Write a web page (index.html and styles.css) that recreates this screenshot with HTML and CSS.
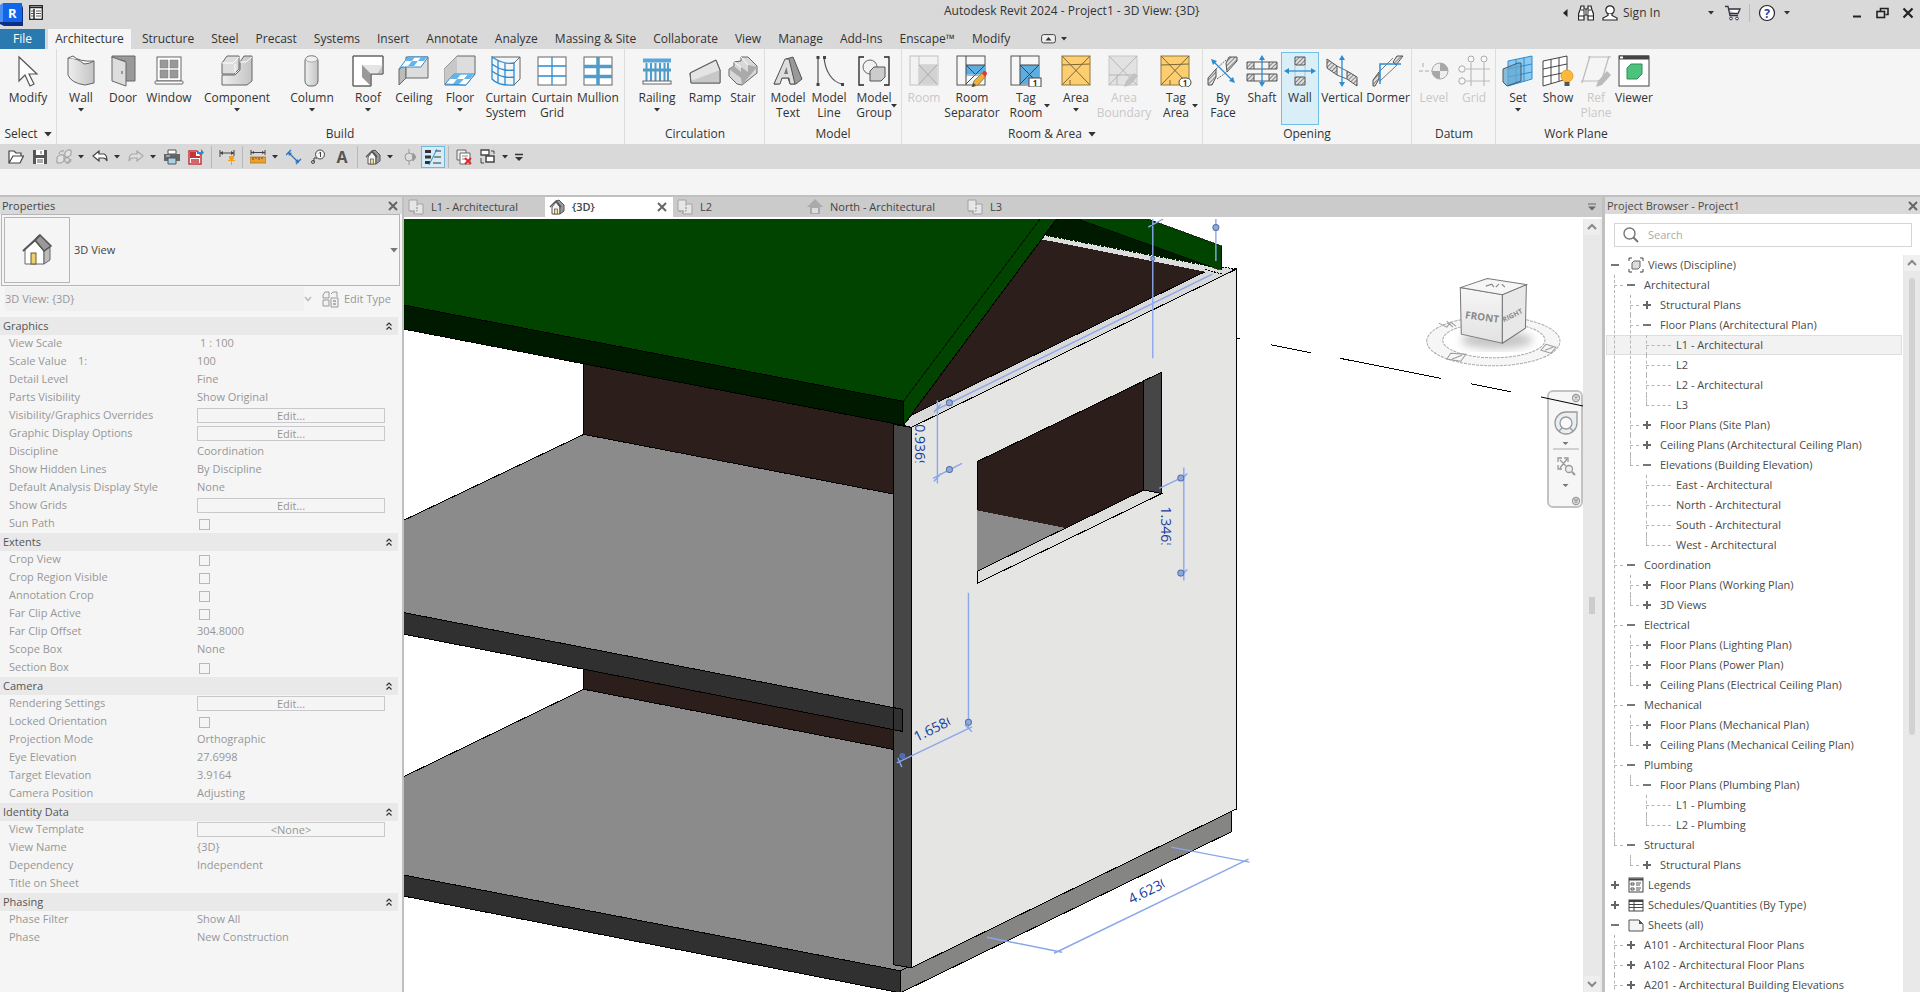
FILE: index.html
```html
<!DOCTYPE html>
<html lang="en">
<head>
<meta charset="utf-8">
<title>Autodesk Revit 2024 - Project1 - 3D View: {3D}</title>
<link rel="stylesheet" href="styles.css">
</head>
<body>
<svg class="defs" aria-hidden="true">
  <defs>
    <pattern id="hatch" width="3" height="3" patternUnits="userSpaceOnUse" patternTransform="rotate(45)"><rect width="3" height="3" fill="#e2e2e2"/><path d="M0 0V3" stroke="#555" stroke-width="1.4"/></pattern>
    <linearGradient id="metal"><stop offset="0" stop-color="#eee"/><stop offset="1" stop-color="#c4c4c4"/></linearGradient>
    <symbol id="caret" viewBox="0 0 6 4"><path d="M0 0H6L3 3.500Z" fill="#333"/></symbol>
    <symbol id="plus" viewBox="0 0 10 10"><path d="M1 5H9M5 1V9" stroke="#666" stroke-width="2"/></symbol>
    <symbol id="minus" viewBox="0 0 10 10"><path d="M1 5H9" stroke="#777" stroke-width="2"/></symbol>
    <symbol id="cross" viewBox="0 0 12 12"><path d="M2 2L10 10M10 2L2 10" stroke="#666" stroke-width="2"/></symbol>
    <symbol id="collapse" viewBox="0 0 8 10"><path d="M1.500 4.500L4 2L6.500 4.500M1.500 8.500L4 6L6.500 8.500" fill="none" stroke="#333" stroke-width="1.200"/></symbol>
    <symbol id="plan" viewBox="0 0 16 16"><path d="M1 1H9V5H15V15H6V12H1Z" fill="#e6e6e6" stroke="#a2a2a2"/><path d="M9 5V12H1M6 12V15M9 8V12" fill="none" stroke="#a2a2a2" stroke-dasharray="2 1"/></symbol>
    <symbol id="house" viewBox="0 0 16 16"><path d="M3 8L7 3L11 8V15H3Z" fill="#f4f4f4" stroke="#555"/><path d="M7 2L10 1L15 6V12L11 15V8Z" fill="#999" stroke="#555"/><path d="M1 8L7 2L12 8" fill="none" stroke="#555" stroke-width="1.400"/><rect x="5.500" y="10" width="3" height="5" fill="#f2e07a" stroke="#555" stroke-width=".7"/></symbol>
  </defs>
</svg>

<header class="titlebar">
  <div class="brand">
    <svg width="23" height="24" viewBox="0 0 23 24"><path d="M0 3L3 1V20L0 22Z" fill="#4b8ff2"/><path d="M22 3L23 6V24H4L0 22V20H22Z" fill="#0b2f86"/><rect x="3" y="1" width="19" height="19" fill="#1265e8"/><text x="8" y="16" class="brand-letter">R</text></svg>
    <svg width="14" height="15" viewBox="0 0 14 15"><rect x=".7" y=".7" width="12.600" height="13.600" fill="#fff" stroke="#222" stroke-width="1.300"/><path d="M1 2.500H13M5 4V14" stroke="#222" stroke-width="1.500"/><path d="M2 6H4M2 8.500H4M2 11H4M7 6H12M7 8.500H12M7 11H12" stroke="#555"/></svg>
  </div>
  <h1 class="title">Autodesk Revit 2024 - Project1 - 3D View: {3D}</h1>
  <div class="account">
    <svg width="5" height="8" viewBox="0 0 5 8"><path d="M4.500 0V8L0 4Z" fill="#222"/></svg>
    <svg class="find" width="16" height="16" viewBox="0 0 16 16"><path d="M2 5L3 1H6V4H10V1H13L14 5L15.500 9V15H10V10H6V15H.5V9Z" fill="#fff" stroke="#222" stroke-width="1.200"/><path d="M3 5H6V9M13 5H10V9M.5 11H6M10 11H15.500M8 4V10" fill="none" stroke="#222"/></svg>
    <button class="signin"><svg width="16" height="16" viewBox="0 0 16 16"><circle cx="8" cy="5" r="4.200" fill="#fff" stroke="#222" stroke-width="1.200"/><path d="M6 9V10.500L1 13V15H15V13L10 10.500V9" fill="#fff" stroke="#222" stroke-width="1.200"/></svg>Sign In</button>
    <svg width="6" height="4"><use href="#caret"/></svg>
    <svg class="cart" width="16" height="16" viewBox="0 0 16 16"><path d="M0 1.500H3L5 10.500H13M3.500 4H15L13 8.500H4.500" fill="#fff" stroke="#334" stroke-width="1.300"/><circle cx="6" cy="13.500" r="1.400" fill="#fff" stroke="#334"/><circle cx="12" cy="13.500" r="1.400" fill="#fff" stroke="#334"/></svg>
    <i></i>
    <svg class="help" width="18" height="18" viewBox="0 0 18 18"><circle cx="9" cy="9" r="7.500" fill="#fff" stroke="#222" stroke-width="1.200"/><text x="9" y="13.500" class="help-mark">?</text></svg>
    <svg width="6" height="4"><use href="#caret"/></svg>
  </div>
  <div class="window-buttons">
    <button aria-label="Minimize"><svg width="12" height="12"><path d="M2 9.500H10" stroke="#222" stroke-width="2"/></svg></button>
    <button aria-label="Restore"><svg width="13" height="12"><path d="M4.500 4V1.500H12V7.500H9.500" fill="none" stroke="#222" stroke-width="1.600"/><rect x="1" y="4.500" width="7.500" height="6" fill="none" stroke="#222" stroke-width="1.600"/></svg></button>
    <button aria-label="Close"><svg width="12" height="12"><path d="M1.500 1.500L10.500 10.500M10.500 1.500L1.500 10.500" stroke="#222" stroke-width="2.200"/></svg></button>
  </div>
</header>

<nav class="tabs">
  <a href="#" class="file">File</a>
  <a href="#" class="active">Architecture</a>
  <a href="#">Structure</a><a href="#">Steel</a><a href="#">Precast</a><a href="#">Systems</a><a href="#">Insert</a><a href="#">Annotate</a><a href="#">Analyze</a><a href="#">Massing &amp; Site</a><a href="#">Collaborate</a><a href="#">View</a><a href="#">Manage</a><a href="#">Add-Ins</a><a href="#">Enscape™</a><a href="#">Modify</a>
  <button class="ribbon-mode" aria-label="Ribbon display"><svg width="15" height="10" viewBox="0 0 15 10"><rect x=".6" y=".6" width="13.800" height="8.300" rx="2" fill="#eee" stroke="#444"/><path d="M4.500 6.500L7.500 3L10.500 6.500Z" fill="#333"/></svg><svg width="6" height="4"><use href="#caret"/></svg></button>
</nav>

<section class="ribbon">
  <div class="panel">
    <div class="tools">
      <button class="w56"><svg viewBox="0 0 32 32"><path d="M7 2V26L13 20L18 31L22 29L17 19H25Z" fill="#fff" stroke="#555" stroke-width="1.200"/></svg><span>Modify</span></button>
    </div>
    <h2>Select <svg width="8" height="5" viewBox="0 0 6 4"><use href="#caret"/></svg></h2>
  </div>
  <div class="panel build">
    <div class="tools">
      <button class="w44"><svg viewBox="0 0 32 32"><path d="M3 3Q13 3 19 9Q24 9 29 6V28L20 30Q6 28 3 20Z" fill="url(#metal)" stroke="#666"/><path d="M3 3L8 1Q14 7 29 6" fill="#f5f5f5" stroke="#666"/></svg><span>Wall</span><svg class="drop"><use href="#caret"/></svg></button>
      <button class="w40"><svg viewBox="0 0 32 32"><path d="M5 1H28V26H18V6L5 3Z" fill="#999" stroke="#666"/><path d="M5 2L19 7V31L5 26Z" fill="#ddd" stroke="#666"/><path d="M15 16V19" stroke="#555"/></svg><span>Door</span></button>
      <button class="w52"><svg viewBox="0 0 32 32"><rect x="4" y="2" width="24" height="24" fill="#fff" stroke="#666"/><path d="M7 5H15V13H7ZM17 5H25V13H17ZM7 15H15V23H7ZM17 15H25V23H17Z" fill="#999" stroke="#777" stroke-width=".5"/><rect x="2" y="26" width="28" height="3" rx="1" fill="#fff" stroke="#666"/></svg><span>Window</span></button>
      <button class="w84"><svg viewBox="0 0 32 32"><path d="M1 8L6 1H18V14L13 19H1Z" fill="#ddd" stroke="#666"/><path d="M19 7L23 1H31V26L26 30H1V20H14L19 15Z" fill="url(#metal)" stroke="#666"/><path d="M1 8H12L18 2M19 7H25L31 2M14 9V18" stroke="#fff" fill="none"/></svg><span>Component</span><svg class="drop"><use href="#caret"/></svg></button>
      <button class="w66"><svg viewBox="0 0 32 32"><rect x="9" y="1" width="13" height="30" rx="5" fill="url(#metal)" stroke="#666"/><ellipse cx="15.500" cy="4" rx="6" ry="3" fill="#f0f0f0" stroke="#888" stroke-width=".6"/></svg><span>Column</span><svg class="drop"><use href="#caret"/></svg></button>
      <button class="w46"><svg viewBox="0 0 32 32"><path d="M1 1H31V19H19V31H1Z" fill="#fff" stroke="#666"/><path d="M1 1L10 10H31V19H19V31L10 22V10Z" fill="#c2c2c2"/><path d="M10 10H31L25 19H19Z" fill="#e5e5e5"/><path d="M19 31L10 22V10L19 19Z" fill="#999"/><path d="M1 1H31V19H19V31H1Z" fill="none" stroke="#666"/></svg><span>Roof</span><svg class="drop"><use href="#caret"/></svg></button>
      <button class="w46"><svg viewBox="0 0 32 32"><path d="M1 14L8 10V23L1 30Z" fill="#bbb" stroke="#666"/><path d="M8 10V23H30V2H8Z" fill="#ddd" stroke="#666"/><path d="M1 14L10 2H30L23 12H4Z" fill="#fff" stroke="#2b8cd2"/><path d="M10 2H17L14 6H7ZM23 2H29L26 6H20ZM14 6H20L16 11H10Z" fill="#64b4e8"/></svg><span>Ceiling</span></button>
      <button class="w46"><svg viewBox="0 0 32 32"><path d="M1 13L13 1H31V19L22 30H1Z" fill="#ddd" stroke="#666"/><path d="M1 13L13 1V19L1 29Z" fill="#c8c8c8"/><path d="M1 29L10 19H31L22 30Z" fill="#fff" stroke="#2b8cd2"/><path d="M10 19H17L13 24H6ZM24 19H30L26 24H20ZM13 24H20L15 29H9Z" fill="#64b4e8"/></svg><span>Floor</span><svg class="drop"><use href="#caret"/></svg></button>
      <button class="w46"><svg viewBox="0 0 32 32"><path d="M2 2L30 2V24L24 30" fill="#f5f5f5" stroke="#666"/><path d="M2 2Q14 10 24 8V30Q8 31 2 24ZM2 9Q12 17 24 15M2 16Q12 24 24 22M8 5V28M15 8V30" fill="none" stroke="#2b8cd2" stroke-width="1.300"/><path d="M24 8L30 2" stroke="#666"/></svg><span>Curtain<br>System</span></button>
      <button class="w46"><svg viewBox="0 0 32 32"><rect x="2" y="2" width="28" height="28" fill="#fff" stroke="#666"/><path d="M16 2V30M2 11H30M2 21H30" stroke="#2b8cd2" stroke-width="1.300"/></svg><span>Curtain<br>Grid</span></button>
      <button class="w46"><svg viewBox="0 0 32 32"><rect x="2" y="2" width="28" height="28" fill="#fff" stroke="#666"/><path d="M16 2V30M2 11.500H30M2 21.500H30" stroke="#4f9bc9" stroke-width="3.500"/></svg><span>Mullion</span></button>
    </div>
    <h2>Build</h2>
  </div>
  <div class="panel pad">
    <div class="tools">
      <button class="w60"><svg viewBox="0 0 32 32"><path d="M2 5.500H30" stroke="#5ba6d8" stroke-width="4"/><path d="M2 15H30" stroke="#4f9bc9" stroke-width="3"/><path d="M5.500 8V26M10 8V26M14.500 8V26M19 8V26M23.500 8V26M27 8V26" stroke="#4f9bc9" stroke-width="2"/><rect x="2" y="26" width="28" height="3" fill="#fff" stroke="#666"/></svg><span>Railing</span><svg class="drop"><use href="#caret"/></svg></button>
      <button class="w36"><svg viewBox="0 0 32 32"><path d="M1 18L27 5L31 15V28H2Z" fill="#e4e4e4" stroke="#666"/><path d="M2 26L31 15V28H2Z" fill="#c8c8c8"/><path d="M1 18L27 5L31 15V28H2Z" fill="none" stroke="#666"/></svg><span>Ramp</span></button>
      <button class="w40"><svg viewBox="0 0 32 32"><path d="M2 14L7 11V7L14 6V2H21L30 11V18L15 30L10 29L2 21Z" fill="#d8d8d8" stroke="#666"/><path d="M2 14L7 11L14 17V12L21 17V10L30 12L15 30L14 23Z" fill="#aaa"/><path d="M7 7L14 12M14 2L21 10" stroke="#fff"/></svg><span>Stair</span></button>
    </div>
    <h2>Circulation</h2>
  </div>
  <div class="panel">
    <div class="tools">
      <button class="w46"><svg viewBox="0 0 32 32"><path d="M2 29L14 4L21 2L30 24L24 29H18L16 23H10L7 29Z" fill="#999" stroke="#555"/><path d="M2 29L13 4H17L23 29H18L17 23H10L8 29Z" fill="#ddd" stroke="#555"/><path d="M12 19L14.500 12L16 19Z" fill="#777"/></svg><span>Model<br>Text</span></button>
      <button class="w36"><svg viewBox="0 0 32 32"><path d="M5 2V30M11 2C12 16 19 27 29 29" fill="none" stroke="#555" stroke-width="1.200"/><path d="M3.500 1H6.500V4H3.500ZM3.500 28H6.500V31H3.500ZM10 1H13V4H10ZM28 28H31V31H28Z" fill="#444"/></svg><span>Model<br>Line</span></button>
      <button class="w54"><svg viewBox="0 0 32 32"><path d="M6 2H1V30H6M26 2H31V30H26" fill="none" stroke="#222" stroke-width="1.300"/><circle cx="12" cy="12" r="7" fill="#f2f2f2" stroke="#666"/><path d="M12 16L16 12H27V22L23 26H12Z" fill="#ccc" stroke="#555"/></svg><span>Model<br>Group</span><svg class="side"><use href="#caret"/></svg></button>
    </div>
    <h2>Model</h2>
  </div>
  <div class="panel">
    <div class="tools">
      <button class="w44 off"><svg viewBox="0 0 32 32"><rect x="2" y="1" width="28" height="29" fill="#f2f2f2" stroke="#c2c2c2"/><path d="M11 1V30M11 10H30" stroke="#c2c2c2"/><path d="M11 10H29V29H11Z" fill="#d2d2d2"/><path d="M11 10L29 29M29 10L11 29" stroke="#aaa"/></svg><span>Room</span></button>
      <button class="w52"><svg viewBox="0 0 32 32"><rect x="1" y="1" width="28" height="29" fill="#f7f7f7" stroke="#555"/><path d="M10 10H29V19H10Z" fill="#5fadde"/><path d="M10 1V30M10 10H29M10 10L19 19M29 10L10 29" stroke="#444" fill="none"/><path d="M10 20H27" stroke="#2b8cd2"/><path d="M16 32L18 26L26 18L30 21L22 30Z" fill="#f5ad35" stroke="#886"/><path d="M26 18L28 16Q31 16 31 19L29 22Z" fill="#e5333c"/><path d="M16 32L17 28L20 30Z" fill="#444"/></svg><span>Room<br>Separator</span></button>
      <button class="w56"><svg viewBox="0 0 32 32"><rect x="1" y="1" width="28" height="29" fill="#f7f7f7" stroke="#555"/><path d="M10 10H29V29H10Z" fill="#5fadde"/><path d="M10 1V30M10 10H29M10 10L29 29M29 10L10 29" stroke="#444"/><rect x="19" y="23" width="12" height="9" fill="#fff" stroke="#444"/><text x="25" y="31" class="tag-no">1</text></svg><span>Tag<br>Room</span><svg class="side"><use href="#caret"/></svg></button>
      <button class="w44"><svg viewBox="0 0 32 32"><rect x="2" y="1" width="28" height="29" fill="#fcce70" stroke="#94793c"/><path d="M2 1L30 30M30 1L2 30M2 10L30 9M10 25V30" stroke="#7d6638"/></svg><span>Area</span><svg class="drop"><use href="#caret"/></svg></button>
      <button class="w52 off"><svg viewBox="0 0 32 32"><rect x="1" y="1" width="28" height="29" fill="#e2e2e2" stroke="#c8c8c8"/><path d="M1 1L29 30M29 1L1 30M1 20H29M9 20V30" stroke="#b5b5b5"/><path d="M16 32L18 26L26 18L30 21L22 30Z" fill="#c2c2c2"/></svg><span>Area<br>Boundary</span></button>
      <button class="w52"><svg viewBox="0 0 32 32"><rect x="1" y="1" width="28" height="29" fill="#fcce70" stroke="#94793c"/><path d="M1 1L29 30M29 1L1 30M1 10L29 9M10 25V30" stroke="#7d6638"/><rect x="19" y="23" width="12" height="9" rx="4.500" fill="#fff" stroke="#444"/><text x="25" y="31" class="tag-no">1</text></svg><span>Tag<br>Area</span><svg class="side"><use href="#caret"/></svg></button>
    </div>
    <h2>Room &amp; Area <svg width="8" height="5" viewBox="0 0 6 4"><use href="#caret"/></svg></h2>
  </div>
  <div class="panel">
    <div class="tools">
      <button class="w40"><svg viewBox="0 0 32 32"><path d="M1 23L9 14V22L5 30H1ZM19 8L22 2H30V6L20 17Z" fill="url(#hatch)" stroke="#555"/><path d="M9 14L19 5M10 24L20 17" stroke="#666" stroke-dasharray="2 1"/><path d="M6 6L26 26" stroke="#2b8cd2" stroke-width="1.300"/><path d="M4 4L10 6L6 10ZM28 28L22 26L26 22Z" fill="#2b8cd2"/></svg><span>By<br>Face</span></button>
      <button class="w38"><svg viewBox="0 0 32 32"><path d="M1 7H8V14H1ZM23 7H31V14H23ZM1 19H8V26H1ZM23 19H31V26H23Z" fill="url(#hatch)" stroke="#555"/><path d="M8 7H23M8 14H23M8 19H23M8 26H23" stroke="#555"/><path d="M16 4V28" stroke="#2b8cd2" stroke-width="1.300"/><path d="M16 0L19 5H13ZM16 32L19 27H13Z" fill="#2b8cd2"/></svg><span>Shaft</span></button>
      <button class="w38 hot"><svg viewBox="0 0 32 32"><path d="M11 2H21V10H11ZM11 22H21V30H11Z" fill="url(#hatch)" stroke="#555"/><path d="M11 10V22M21 10V22" stroke="#b5c4ca"/><path d="M4 16H28" stroke="#2b8cd2" stroke-width="1.300"/><path d="M0 16L5 13V19ZM32 16L27 13V19Z" fill="#2b8cd2"/></svg><span>Wall</span></button>
      <button class="w46"><svg viewBox="0 0 32 32"><path d="M1 4L11 11V20L1 13ZM21 16L31 22V31L21 24Z" fill="url(#hatch)" stroke="#555"/><path d="M11 11L21 16M11 20L21 24" stroke="#666"/><path d="M16 4V28" stroke="#2b8cd2" stroke-width="1.300"/><path d="M16 0L19 5H13ZM16 32L19 27H13Z" fill="#2b8cd2"/></svg><span>Vertical</span></button>
      <button class="w46"><svg viewBox="0 0 32 32"><path d="M1 25L7 17V24L3 31H1ZM21 7L25 1H31L24 10Z" fill="url(#hatch)" stroke="#555"/><path d="M7 17L21 3M8 26L25 10" stroke="#777"/><path d="M8 29V9H29" fill="none" stroke="#2b8cd2" stroke-width="1.500"/></svg><span>Dormer</span></button>
    </div>
    <h2>Opening</h2>
  </div>
  <div class="panel pad">
    <div class="tools">
      <button class="w40 off"><svg viewBox="0 0 32 32"><path d="M1 16H31M5 8V12" stroke="#aaa" stroke-dasharray="4 2"/><circle cx="22" cy="16" r="8" fill="#eee" stroke="#aaa"/><path d="M22 8A8 8 0 0 1 30 16H22V24A8 8 0 0 1 14 16H22Z" fill="#a8a8a8"/></svg><span>Level</span></button>
      <button class="w40 off"><svg viewBox="0 0 32 32"><path d="M13 8V31M26 8V31M8 14H32M8 26H32" stroke="#bbb" stroke-width="1.200"/><circle cx="13" cy="4" r="3" fill="#f8f8f8" stroke="#aaa"/><circle cx="26" cy="4" r="3" fill="#f8f8f8" stroke="#aaa"/><circle cx="4" cy="14" r="3.200" fill="#f8f8f8" stroke="#aaa"/><circle cx="4" cy="26" r="3.200" fill="#f8f8f8" stroke="#aaa"/></svg><span>Grid</span></button>
    </div>
    <h2>Datum</h2>
  </div>
  <div class="panel last">
    <div class="tools">
      <button class="w40"><svg viewBox="0 0 32 32"><path d="M6 6L30 1V24L6 31Z" fill="#8cc9ef" stroke="#2b8cd2"/><path d="M14 4V29M22 3V26M6 14L30 9M6 22L30 17" stroke="#2b8cd2"/><path d="M1 14L16 8H19V26L5 31L1 27Z" fill="#64a8d2" fill-opacity=".75" stroke="#455a68"/></svg><span>Set</span><svg class="drop"><use href="#caret"/></svg></button>
      <button class="w40"><svg viewBox="0 0 32 32"><path d="M1 6L25 1V24L1 31ZM9 4V29M17 3V26M1 14L25 9M1 22L25 17" fill="#fff" stroke="#444"/><circle cx="25" cy="21" r="6" fill="#fdb93c" stroke="#e5a02b"/><path d="M22.500 27H27.500V31H22.500Z" fill="#555"/></svg><span>Show</span></button>
      <button class="w36 off"><svg viewBox="0 0 32 32"><path d="M8 2H31M1 26H24M10 1L2 28M29 1L21 28" stroke="#bbb" stroke-width="1.200"/><path d="M16 32L18 26L27 16L31 20L22 30Z" fill="#bbb"/></svg><span>Ref<br>Plane</span></button>
      <button class="w40"><svg viewBox="0 0 32 32"><rect x="1" y="1" width="30" height="30" fill="#fff" stroke="#444"/><path d="M1 2.500H31" stroke="#444" stroke-width="4"/><path d="M2 1.500H5V3.500H2Z" fill="#fff"/><path d="M9 13L13 9H24V19L19 24H9Z" fill="#4cc27c" stroke="#2e8f56"/></svg><span>Viewer</span></button>
    </div>
    <h2>Work Plane</h2>
  </div>
</section>

<div class="quick">
  <button aria-label="Open"><svg viewBox="0 0 16 16"><path d="M1 14V2H6L8 4H13V7M1 14L5 7H15.500L12 14Z" fill="#fff" stroke="#444" stroke-width="1.200"/></svg></button>
  <button aria-label="Save"><svg viewBox="0 0 16 16"><path d="M1 1H15V15H1Z" fill="#555"/><path d="M4 1H12V6H4ZM4 9H12V15H4Z" fill="#fff"/><path d="M9 2V5M5 11H11M5 13H11" stroke="#555"/></svg></button>
  <button aria-label="Synchronize" class="split"><svg viewBox="0 0 16 16"><path d="M1 8L4 6H8V12L5 14H1ZM9 3L12 1H15V6L12 8H9Z" fill="#e2e2e2" stroke="#999"/><path d="M3 5Q4 1 8 2M10 14Q15 15 15 10" fill="none" stroke="#999"/><circle cx="11" cy="11" r="2.500" fill="none" stroke="#999"/></svg><svg class="c"><use href="#caret"/></svg></button>
  <button aria-label="Undo" class="split"><svg viewBox="0 0 16 16"><path d="M1 7L7 2V5H12Q15 6 15 12Q14 9 11 9H7V12Z" fill="#fff" stroke="#444" stroke-width="1.200"/></svg><svg class="c"><use href="#caret"/></svg></button>
  <button aria-label="Redo" class="split"><svg viewBox="0 0 16 16"><path d="M15 7L9 2V5H4Q1 6 1 12Q2 9 5 9H9V12Z" fill="#ddd" stroke="#aaa" stroke-width="1.200"/></svg><svg class="c"><use href="#caret"/></svg></button>
  <button aria-label="Print"><svg viewBox="0 0 16 16"><path d="M4 1H12V5H4Z" fill="#fff" stroke="#555"/><path d="M0 5H16V12H0Z" fill="#666"/><path d="M4 9H12V15H4Z" fill="#a9cfe9" stroke="#555"/><path d="M2 7H6" stroke="#ddd"/></svg></button>
  <button aria-label="Export PDF"><svg viewBox="0 0 16 16"><path d="M1 2H9L13 6V15H1Z" fill="#fff" stroke="#c5343a" stroke-width="1.500"/><path d="M2 3H8V7H12V9H2Z" fill="#c5343a"/><path d="M3 11H11M3 13H11" stroke="#c5343a" stroke-width="1.400"/><path d="M9 3H13V0L16 3.500L13 7V5H9Z" fill="#2b8cd2"/></svg></button>
  <i></i>
  <button aria-label="Aligned dimension"><svg viewBox="0 0 16 16"><path d="M1 1V8M15 1V7M1 4H15" stroke="#444"/><path d="M1 4L4 2V6ZM15 4L12 2V6Z" fill="#444"/><path d="M10 7H15V9L14 11H16V12H13V16H12V12H9V11H11L10 9Z" fill="#f0a020"/></svg></button>
  <i></i>
  <button aria-label="Measure" class="split"><svg viewBox="0 0 16 16"><path d="M1 1V6M15 1V6M1 3.500H15" stroke="#444"/><path d="M1 3.500L4 2V5ZM15 3.500L12 2V5Z" fill="#444"/><path d="M0 8H16V14H0Z" fill="#eda12c" stroke="#a46e18" stroke-width=".7"/><path d="M3 8V11M6 8V10M9 8V11M12 8V10" stroke="#744"/></svg><svg class="c"><use href="#caret"/></svg></button>
  <button aria-label="Dimension"><svg viewBox="0 0 16 16"><path d="M3 4L12 13M0 6L5 1M10 15L15 10" stroke="#2b73c2" stroke-width="1.300"/><path d="M2 3L6 4L3 7ZM13 14L9 13L12 10Z" fill="#2b73c2"/></svg></button>
  <button aria-label="Tag"><svg viewBox="0 0 16 16"><circle cx="10" cy="5.500" r="4.500" fill="#f4f4f4" stroke="#444"/><path d="M9 4.500L10.500 3V8M7 9H4V13" fill="none" stroke="#444"/><circle cx="3" cy="13" r="1.500" fill="none" stroke="#444"/></svg></button>
  <button aria-label="Text" class="big-a">A</button>
  <i></i>
  <button aria-label="Default 3D view" class="split"><svg viewBox="0 0 16 16"><use href="#house"/></svg><svg class="c"><use href="#caret"/></svg></button>
  <button aria-label="Section"><svg viewBox="0 0 16 16"><circle cx="8" cy="8" r="4" fill="#ddd" stroke="#999"/><path d="M8 0V4M8 12V16M12 4L15 8L12 12Z" stroke="#999" fill="#999"/></svg></button>
  <button aria-label="Thin lines" class="on"><svg viewBox="0 0 16 16"><path d="M0 2.500H6M0 8H6M0 13.500H5" stroke="#333" stroke-width="3"/><path d="M10 2H16M9 8H16M8 14H16" stroke="#333"/><path d="M12 0L4 16" stroke="#2b8cd2"/></svg></button>
  <i></i>
  <button aria-label="Close inactive"><svg viewBox="0 0 16 16"><path d="M1 1H10V11H1Z" fill="#eee" stroke="#666"/><path d="M4 4H14V15H4Z" fill="#fff" stroke="#666"/><path d="M6 7H12M6 10H10" stroke="#888"/><path d="M9 9L15 15M15 9L9 15" stroke="#e02a33" stroke-width="2"/></svg></button>
  <button aria-label="Switch windows" class="split"><svg viewBox="0 0 16 16"><path d="M1 1H9V6H1Z" fill="#fff" stroke="#444" stroke-width="1.300"/><path d="M6 7H14V13H6Z" fill="#fff" stroke="#444" stroke-width="1.500"/><path d="M11 2H14V5M4 14H1V9" fill="none" stroke="#444"/></svg><svg class="c"><use href="#caret"/></svg></button>
  <button aria-label="Customize" class="custom"><svg viewBox="0 0 16 16"><path d="M4 5.500H12" stroke="#333" stroke-width="1.500"/><path d="M4 8H12L8 12Z" fill="#333"/></svg></button>
</div>
<div class="options"></div>

<main class="dock">
  <aside class="properties">
    <header class="dock-title"><h2>Properties</h2><button aria-label="Close properties"><svg width="12" height="12"><use href="#cross"/></svg></button></header>
    <button class="type">
      <span class="thumb"><svg width="32" height="32" viewBox="0 0 32 32"><path d="M4 15L14 7L23 17V30H4Z" fill="#fff" stroke="#666"/><path d="M23 17L29 13V26L23 30Z" fill="#bbb" stroke="#666"/><path d="M14 6L19 1L30 12L23 17Z" fill="#999" stroke="#555" stroke-width="1.500"/><path d="M2 17L14 6L19 1" fill="none" stroke="#555" stroke-width="2"/><rect x="10" y="19" width="5" height="11" fill="#efcf70" stroke="#6a5a2a"/></svg></span>
      <span class="type-name">3D View</span>
      <svg width="8" height="5" viewBox="0 0 6 4"><path d="M0 0H6L3 3.500Z" fill="#777"/></svg>
    </button>
    <div class="instance">
      <select aria-label="Instance"><option>3D View: {3D}</option></select>
      <svg class="chev" width="8" height="6"><path d="M1 1L4 4.500L7 1" fill="none" stroke="#bbb" stroke-width="1.500"/></svg>
      <button><svg width="17" height="17" viewBox="0 0 17 17"><path d="M1 4L3 1H7V7H1ZM9 3L11 1H15V6M1 9H7V15H1ZM9 7H16V16H9Z" fill="#f2f2f2" stroke="#999"/><path d="M11 10H14M11 13H14" stroke="#999" stroke-width="1.500"/></svg>Edit Type</button>
    </div>
    <table class="props">
      <colgroup><col class="name"><col></colgroup>
      <tbody>
        <tr class="group"><th colspan="2">Graphics <svg><use href="#collapse"/></svg></th></tr>
        <tr><td>View Scale</td><td class="in">1 : 100</td></tr>
        <tr><td>Scale Value &nbsp;&nbsp; 1:</td><td>100</td></tr>
        <tr><td>Detail Level</td><td>Fine</td></tr>
        <tr><td>Parts Visibility</td><td>Show Original</td></tr>
        <tr><td>Visibility/Graphics Overrides</td><td><button>Edit...</button></td></tr>
        <tr><td>Graphic Display Options</td><td><button>Edit...</button></td></tr>
        <tr><td>Discipline</td><td>Coordination</td></tr>
        <tr><td>Show Hidden Lines</td><td>By Discipline</td></tr>
        <tr><td>Default Analysis Display Style</td><td>None</td></tr>
        <tr><td>Show Grids</td><td><button>Edit...</button></td></tr>
        <tr><td><label for="sun">Sun Path</label></td><td><input type="checkbox" id="sun"></td></tr>
      </tbody>
      <tbody>
        <tr class="group"><th colspan="2">Extents <svg><use href="#collapse"/></svg></th></tr>
        <tr><td><label for="crop">Crop View</label></td><td><input type="checkbox" id="crop"></td></tr>
        <tr><td><label for="region">Crop Region Visible</label></td><td><input type="checkbox" id="region"></td></tr>
        <tr><td><label for="anno">Annotation Crop</label></td><td><input type="checkbox" id="anno"></td></tr>
        <tr><td><label for="far">Far Clip Active</label></td><td><input type="checkbox" id="far"></td></tr>
        <tr><td>Far Clip Offset</td><td>304.8000</td></tr>
        <tr><td>Scope Box</td><td>None</td></tr>
        <tr><td><label for="section">Section Box</label></td><td><input type="checkbox" id="section"></td></tr>
      </tbody>
      <tbody>
        <tr class="group"><th colspan="2">Camera <svg><use href="#collapse"/></svg></th></tr>
        <tr><td>Rendering Settings</td><td><button>Edit...</button></td></tr>
        <tr><td><label for="locked">Locked Orientation</label></td><td><input type="checkbox" id="locked"></td></tr>
        <tr><td>Projection Mode</td><td>Orthographic</td></tr>
        <tr><td>Eye Elevation</td><td>27.6998</td></tr>
        <tr><td>Target Elevation</td><td>3.9164</td></tr>
        <tr><td>Camera Position</td><td>Adjusting</td></tr>
      </tbody>
      <tbody>
        <tr class="group"><th colspan="2">Identity Data <svg><use href="#collapse"/></svg></th></tr>
        <tr><td>View Template</td><td><button>&lt;None&gt;</button></td></tr>
        <tr><td>View Name</td><td>{3D}</td></tr>
        <tr><td>Dependency</td><td>Independent</td></tr>
        <tr><td>Title on Sheet</td><td></td></tr>
      </tbody>
      <tbody>
        <tr class="group"><th colspan="2">Phasing <svg><use href="#collapse"/></svg></th></tr>
        <tr><td>Phase Filter</td><td>Show All</td></tr>
        <tr><td>Phase</td><td>New Construction</td></tr>
      </tbody>
    </table>
  </aside>

  <section class="workspace">
    <div class="view-tabs">
      <button><svg><use href="#plan"/></svg>L1 - Architectural</button>
      <button class="active"><svg><use href="#house"/></svg>{3D}<svg class="x"><use href="#cross"/></svg></button>
      <button><svg><use href="#plan"/></svg>L2</button>
      <button class="wide"><svg viewBox="0 0 16 16"><path d="M8 0L16 8H13V15H3V8H0Z" fill="#aaa"/><path d="M5 9H11V14H5Z" fill="#ddd"/></svg>North - Architectural</button>
      <button><svg><use href="#plan"/></svg>L3</button>
      <svg class="list" viewBox="0 0 10 8"><path d="M1 1H9" stroke="#666"/><path d="M1 3.500H9L5 7.500Z" fill="#666"/></svg>
    </div>
    <div class="view">
      <svg class="scene" viewBox="405 219 1177 773" preserveAspectRatio="xMinYMin slice" role="img" aria-label="3D model of a two-storey house">
        <defs>
          <clipPath id="c1"><rect x="0" y="-14" width="38" height="18"/></clipPath>
          <linearGradient id="face" x2="0" y2="1"><stop offset="0" stop-color="#f6f6f6"/><stop offset="1" stop-color="#e2e2e2"/></linearGradient>
          <filter id="soft"><feGaussianBlur stdDeviation="4"/></filter>
        </defs>
        <g stroke="#000" shape-rendering="crispEdges">
          <path d="M1236 338.500H1240M1270 344.500L1310 352.500M1339 358L1440 378M1470 383.500L1510 391.500" fill="none"/>
          <path d="M584.500 360V434L893.500 493.500V420Z" fill="#2c1e1b"/>
          <path d="M400 522L584.500 434L893.500 493.500V708L400 612Z" fill="#8b8b8b"/>
          <path d="M584.500 664V688.500L893.500 748.500V724Z" fill="#2c1e1b"/>
          <path d="M400 778L584.500 688.500L893.500 748.500V965L900.500 969.500L400 873Z" fill="#8b8b8b"/>
          <path d="M893 962L912 966L900.500 970L893 969Z" fill="#8b8b8b" stroke="none"/>
          <path d="M400 873L900.500 969.500V991.500L400 894Z" fill="#303030"/>
          <path d="M900.500 969.500L1231.500 808V830.500L900.500 991.500Z" fill="#858584"/>
          <path d="M893.500 424L911.500 427V966.500L893.500 963.500Z" fill="#464646"/>
          <path d="M400 611L902.500 708.500V730.500L400 632.500Z" fill="#303030"/>
          <path d="M893.500 706V730" fill="none"/>
          <path d="M911.500 427L1236 269V808L911.500 966.500Z" fill="#e5e5e3"/>
          <path d="M1030 236L1045 237L1207 271L912 417H895Z" fill="#2c1e1b" stroke="none"/>
          <path d="M903 425L912 414.500L1207 270.500L1236 269L911.500 427Z" fill="#d9d9d9"/>
          <path d="M1040 235L1222 267L1236 269L1207 272L1040 239Z" fill="#ddd" stroke="none"/>
          <path d="M1040 218H1077L1219 268.500L1040 235Z" fill="#001a00" stroke="none"/>
          <path d="M1045 235.500L1219 268" fill="none" stroke="#fff" stroke-dasharray="1 3"/>
          <path d="M1222 267L1236 269M1205 269.500L1222 274" fill="none" stroke-dasharray="2 1"/>
          <path d="M1075 218H1145L1221.500 246V269.500L1217 269Z" fill="#004400" stroke-width=".7"/>
          <path d="M400 215H1059.500L903.500 425V401L400 304Z" fill="#004400"/>
          <path d="M1040 219L903.500 401" fill="none" stroke="#001800"/>
          <path d="M400 304L903.500 401V425L400 328Z" fill="#001a00"/>
          <path d="M977.500 461L1161.500 372V493L977.500 582.500Z" fill="#2c1e1b"/>
          <path d="M977.500 510L1065.500 527.500L977.500 570.500Z" fill="#8b8b8b" stroke="none"/>
          <path d="M1143.500 380.500L1161.500 372V493L1143.500 489.500Z" fill="#464646"/>
          <path d="M977.500 570.500L1143.500 489.500L1161.500 493L977.500 582.500Z" fill="#dededc"/>
        </g>
        <g fill="none" stroke="#8aa6ec" stroke-width="1.400">
          <path d="M1152.500 219V358M1148 227L1163 219M1215.500 219V261M935 410L1212 274M937.500 400V483M933 478L962 463M1159 488L1184 476M1183.500 467V580M968.500 592V728M897 762L972 726M1054 952L1248 858M987 936L1062 951M1171 846L1249 861M934 412L941 404M934 481L941 473M1180 480L1187 473M1180 576L1187 569M898 757L902 766M965 724L972 731"/>
        </g>
        <g fill="#8fa9dd" stroke="#5570a5">
          <circle cx="949.500" cy="402.500" r="3"/><circle cx="949.500" cy="469" r="3"/><circle cx="1180.500" cy="477.500" r="3"/><circle cx="1180.500" cy="572.500" r="3"/><circle cx="968.500" cy="721.500" r="3"/><circle cx="902.500" cy="755" r="2.500" fill="#456fc4"/><circle cx="1215.500" cy="227.500" r="3"/><circle cx="1152.500" cy="258.500" r="2"/>
        </g>
        <g class="dims">
          <g transform="translate(915 424) rotate(90)"><text clip-path="url(#c1)">0.9369</text></g>
          <g transform="translate(1161 506) rotate(90)"><text clip-path="url(#c1)">1.3465</text></g>
          <g transform="translate(917 741) rotate(-26)"><text clip-path="url(#c1)">1.6586</text></g>
          <g transform="translate(1131 903) rotate(-26)"><text clip-path="url(#c1)">4.6230</text></g>
        </g>
        <g class="cube">
          <path fill-rule="evenodd" d="M1426 341A66.500 24.500 0 0 1 1559 341A66.500 24.500 0 0 1 1426 341ZM1442 340A51 17.500 0 0 0 1544 340A51 17.500 0 0 0 1442 340Z" fill="#f6f6f6" stroke="#aaa" stroke-dasharray="3 1"/>
          <ellipse cx="1496" cy="340" rx="36" ry="9" fill="#999" opacity=".55" filter="url(#soft)"/>
          <path d="M1459.500 287.500L1501.500 294.500V343L1460.500 334Z" fill="url(#face)" stroke="#777"/>
          <path d="M1501.500 294.500L1525.500 284.500L1524.500 328L1501.500 343Z" fill="#e8e8e8" stroke="#777"/>
          <path d="M1459.500 287.500L1486.500 278.500L1525.500 284.500L1501.500 294.500Z" fill="#f6f6f6" stroke="#777"/>
          <path d="M1485 286L1491 284L1493 287M1495 287L1498 284M1501 284L1504 287" fill="none" stroke="#888" stroke-width="1.200"/>
          <text x="0" y="0" transform="translate(1464 318) rotate(8)" font-size="10">FRONT</text>
          <text x="0" y="0" transform="translate(1503 322) rotate(-26)" font-size="7">RIGHT</text>
          <g fill="none" stroke="#999"><path d="M1438 323L1446 327L1450 322L1455 326M1446 321L1452 327"/><path d="M1446 359L1450 353L1465 354L1460 361ZM1451 359L1461 355"/><path d="M1540 350L1545 344L1555 347L1550 353ZM1544 350L1552 347"/></g>
        </g>
      </svg>
      <div class="nav">
        <svg viewBox="0 0 34 116"><path d="M-8 5L34 14" stroke="#000"/>
          <g fill="#eee" stroke="#999" stroke-width="1.300"><circle cx="27" cy="6" r="3.500"/><path d="M25.500 4.500L28.500 7.500M28.500 4.500L25.500 7.500"/><circle cx="27" cy="109" r="3.500"/><path d="M25 108H29M25.500 110H28.500"/>
          <path d="M17 20H28V31A11 11 0 1 1 17 20Z" fill="#e8eff2"/><circle cx="17" cy="31" r="6" fill="#fafafa"/><path d="M13 36L10 39M21 36L24 39"/>
          <path d="M4 57H30" stroke="#bbb"/><path d="M9 70V66H13M15 66H19V70M9 73V77H13M11 68L17 74M18 67L11 76" fill="none"/><circle cx="20" cy="77" r="3.500"/><path d="M23 80L26 83" stroke-width="2"/></g>
          <path d="M13.500 50H19.500L16.500 53ZM13.500 92H19.500L16.500 95Z" fill="#777"/></svg>
      </div>
      <div class="vscroll"><svg viewBox="0 0 16 16"><path d="M4 10L8 6L12 10" fill="none" stroke="#888" stroke-width="2"/></svg><span></span><svg viewBox="0 0 16 16"><path d="M4 6L8 10L12 6" fill="none" stroke="#888" stroke-width="2"/></svg></div>
    </div>
  </section>

  <aside class="browser">
    <header class="dock-title"><h2>Project Browser - Project1</h2><button aria-label="Close browser"><svg width="12" height="12"><use href="#cross"/></svg></button></header>
    <label class="search"><svg width="16" height="16" viewBox="0 0 16 16"><circle cx="6.500" cy="6.500" r="5.500" fill="none" stroke="#777" stroke-width="1.400"/><path d="M10.500 10.500L15 15" stroke="#777" stroke-width="2"/></svg><input type="text" placeholder="Search"></label>
    <div class="tree-area">
      <ul class="tree">
        <li><div><button><svg><use href="#minus"/></svg></button><svg class="icon" viewBox="0 0 16 16"><path d="M4 1H1V4M12 1H15V4M1 12V15H4M15 12V15H12" fill="none" stroke="#444"/><path d="M4 6L6 4H12V10L10 12H4Z" fill="#ddd" stroke="#666"/></svg>Views (Discipline)</div>
          <ul>
            <li><div><button><svg><use href="#minus"/></svg></button>Architectural</div>
              <ul>
                <li><div><button><svg><use href="#plus"/></svg></button>Structural Plans</div></li>
                <li><div><button><svg><use href="#minus"/></svg></button>Floor Plans (Architectural Plan)</div>
                  <ul>
                    <li class="leaf"><div class="selected">L1 - Architectural</div></li>
                    <li class="leaf"><div>L2</div></li>
                    <li class="leaf"><div>L2 - Architectural</div></li>
                    <li class="leaf"><div>L3</div></li>
                  </ul></li>
                <li><div><button><svg><use href="#plus"/></svg></button>Floor Plans (Site Plan)</div></li>
                <li><div><button><svg><use href="#plus"/></svg></button>Ceiling Plans (Architectural Ceiling Plan)</div></li>
                <li><div><button><svg><use href="#minus"/></svg></button>Elevations (Building Elevation)</div>
                  <ul>
                    <li class="leaf"><div>East - Architectural</div></li>
                    <li class="leaf"><div>North - Architectural</div></li>
                    <li class="leaf"><div>South - Architectural</div></li>
                    <li class="leaf"><div>West - Architectural</div></li>
                  </ul></li>
              </ul></li>
            <li><div><button><svg><use href="#minus"/></svg></button>Coordination</div>
              <ul>
                <li><div><button><svg><use href="#plus"/></svg></button>Floor Plans (Working Plan)</div></li>
                <li><div><button><svg><use href="#plus"/></svg></button>3D Views</div></li>
              </ul></li>
            <li><div><button><svg><use href="#minus"/></svg></button>Electrical</div>
              <ul>
                <li><div><button><svg><use href="#plus"/></svg></button>Floor Plans (Lighting Plan)</div></li>
                <li><div><button><svg><use href="#plus"/></svg></button>Floor Plans (Power Plan)</div></li>
                <li><div><button><svg><use href="#plus"/></svg></button>Ceiling Plans (Electrical Ceiling Plan)</div></li>
              </ul></li>
            <li><div><button><svg><use href="#minus"/></svg></button>Mechanical</div>
              <ul>
                <li><div><button><svg><use href="#plus"/></svg></button>Floor Plans (Mechanical Plan)</div></li>
                <li><div><button><svg><use href="#plus"/></svg></button>Ceiling Plans (Mechanical Ceiling Plan)</div></li>
              </ul></li>
            <li><div><button><svg><use href="#minus"/></svg></button>Plumbing</div>
              <ul>
                <li><div><button><svg><use href="#minus"/></svg></button>Floor Plans (Plumbing Plan)</div>
                  <ul>
                    <li class="leaf"><div>L1 - Plumbing</div></li>
                    <li class="leaf"><div>L2 - Plumbing</div></li>
                  </ul></li>
              </ul></li>
            <li><div><button><svg><use href="#minus"/></svg></button>Structural</div>
              <ul>
                <li><div><button><svg><use href="#plus"/></svg></button>Structural Plans</div></li>
              </ul></li>
          </ul></li>
        <li><div><button><svg><use href="#plus"/></svg></button><svg class="icon" viewBox="0 0 16 16"><rect x="1" y="1" width="14" height="14" fill="#fff" stroke="#444"/><path d="M1 2.500H15" stroke="#444" stroke-width="2"/><path d="M3 6H6V8H3ZM3 11H6V13H3ZM8 6H13M8 8H12M8 11H13M8 13H12" fill="none" stroke="#555"/></svg>Legends</div></li>
        <li><div><button><svg><use href="#plus"/></svg></button><svg class="icon" viewBox="0 0 16 16"><rect x="1" y="3" width="14" height="11" fill="#fff" stroke="#444"/><path d="M1 4H15" stroke="#444" stroke-width="2"/><path d="M1 7.500H15M1 10.500H15M6 3V14" stroke="#444"/></svg>Schedules/Quantities (By Type)</div></li>
        <li><div><button><svg><use href="#minus"/></svg></button><svg class="icon" viewBox="0 0 16 16"><path d="M1 3H11L15 7V14H1Z" fill="#f4f4f4" stroke="#555"/><path d="M11 3L15 7H11Z" fill="#555"/></svg>Sheets (all)</div>
          <ul>
            <li><div><button><svg><use href="#plus"/></svg></button>A101 - Architectural Floor Plans</div></li>
            <li><div><button><svg><use href="#plus"/></svg></button>A102 - Architectural Floor Plans</div></li>
            <li><div><button><svg><use href="#plus"/></svg></button>A201 - Architectural Building Elevations</div></li>
            <li></li>
          </ul></li>
      </ul>
      <div class="tscroll"><svg viewBox="0 0 16 16"><path d="M4 10L8 6L12 10" fill="none" stroke="#888" stroke-width="2"/></svg><span></span></div>
    </div>
  </aside>
</main>
</body>
</html>
```
FILE: styles.css
```css
* { box-sizing: border-box; }
html, body { height: 100%; }
body {
  margin: 0;
  display: flex;
  flex-direction: column;
  overflow: hidden;
  background: #f5f5f5;
  color: #333;
  font: 12px/16px "Open Sans", "Noto Sans", sans-serif;
}
button, input, select { font: inherit; color: inherit; background: none; border: 0; padding: 0; margin: 0; }
h1, h2 { margin: 0; font: inherit; }
a { color: inherit; text-decoration: none; }
ul { list-style: none; margin: 0; padding: 0; }
svg { display: block; flex: none; }
.defs { position: absolute; width: 0; height: 0; }

/* Title bar */
.titlebar { flex: none; display: flex; height: 29px; background: #d9d9d9; }
.brand { display: flex; gap: 6px; padding: 2px 0 0 0; }
.brand svg + svg { margin-top: 3px; }
.brand-letter { font: bold 13px "Open Sans", sans-serif; fill: #fff; }
.title { flex: 1; padding: 3px 0 0 28%; text-align: center; white-space: nowrap; }
.account { display: flex; align-items: center; padding-bottom: 4px; }
.account i { width: 1px; height: 18px; background: #bbb; }
.find { margin: 0 8px 0 10px; }
.signin { display: flex; align-items: center; gap: 5px; width: 106px; }
.cart { margin: 0 8px 0 11px; }
.help { margin: 0 8px; }
.help-mark { font: bold 12px "Open Sans", sans-serif; fill: #2440b0; text-anchor: middle; }
.window-buttons { display: flex; align-items: center; gap: 13px; padding: 0 6px 4px 61px; }

/* Ribbon tabs */
.tabs { flex: none; display: flex; height: 20px; background: #d9d9d9; }
.tabs a { padding: 2px 9px 0 8px; white-space: nowrap; }
.tabs .file { width: 45px; padding: 2px 0 0; margin-right: 3px; text-align: center; background: #2a7ab0; color: #fff; }
.tabs .active { width: 83px; padding: 2px 0 0; text-align: center; background: #f5f5f5; margin-right: 3px; }
.ribbon-mode { display: flex; align-items: center; gap: 5px; margin-left: 22px; }

/* Ribbon */
.ribbon { flex: none; display: flex; height: 95px; background: #f5f5f5; }
.panel { display: flex; flex-direction: column; justify-content: space-between; border-right: 1px solid #dcdcdc; padding-top: 3px; }
.panel.build { padding: 3px 3px 0 2px; }
.panel.pad { padding-left: 2px; padding-right: 1px; }
.panel.last { border: 0; padding-left: 2px; }
.panel h2 { display: flex; justify-content: center; align-items: center; gap: 6px; padding-bottom: 2px; white-space: nowrap; }
.tools { display: flex; }
.tools button { position: relative; display: flex; flex-direction: column; align-items: center; height: 73px; padding-top: 2px; line-height: 15px; white-space: nowrap; border: 1px solid transparent; }
.tools button > svg:first-child { width: 32px; height: 32px; margin-bottom: 3px; }
.tools .drop { width: 6px; height: 4px; margin-top: 3px; }
.tools .side { position: absolute; right: 3px; bottom: 16px; width: 6px; height: 4px; }
.tools .off { color: #c8c8c8; }
.tools .hot { background: #d9eef6; border-color: #6fc0e4; }
.tag-no { font: bold 8px "Open Sans", sans-serif; text-anchor: middle; fill: #333; }
.w36 { width: 36px; } .w38 { width: 38px; } .w40 { width: 40px; } .w44 { width: 44px; }
.w46 { width: 46px; } .w52 { width: 52px; } .w54 { width: 54px; } .w56 { width: 56px; }
.w60 { width: 60px; } .w66 { width: 66px; } .w84 { width: 84px; }

/* Quick access toolbar */
.quick { flex: none; display: flex; align-items: center; height: 25px; padding-left: 4px; background: #d9d9d9; }
.quick button { display: flex; align-items: center; justify-content: center; gap: 6px; width: 24px; height: 22px; }
.quick button svg { width: 16px; height: 16px; }
.quick .split { width: 36px; }
.quick .split .c { width: 6px; height: 4px; }
.quick .on { background: #d6ebf5; border: 1px solid #6fb9dc; }
.quick .big-a { font-size: 16px; font-weight: bold; line-height: 22px; color: #555; }
.quick .custom { width: 20px; }
.quick .custom svg { margin-right: 6px; }
.quick i { width: 1px; height: 22px; margin: 0 3px; background: #b8b8b8; }
.options { flex: none; height: 26px; background: #f5f5f5; }

/* Docked area */
.dock { flex: 1; min-height: 0; display: flex; border-top: 2px solid #c0c0c0; font-size: 11px; }
.dock-title { flex: none; display: flex; justify-content: space-between; align-items: center; height: 17px; background: #d9d9d9; padding: 0 3px 0 2px; }

/* Properties palette */
.properties { flex: none; width: 404px; border-right: 2px solid #c0c0c0; background: #f5f5f5; color: #979797; }
.properties .dock-title { color: #444; }
.type { display: flex; align-items: center; width: 399px; height: 72px; margin-left: 1px; padding: 2px 1px 2px 2px; border: 1px solid #b5b5b5; color: #444; }
.thumb { display: grid; place-items: center; width: 66px; height: 66px; border: 1px solid #b5b5b5; }
.type-name { flex: 1; padding-left: 4px; text-align: left; }
.instance { display: flex; align-items: center; height: 31px; padding: 0 2px 5px 5px; }
.instance select { flex: 1; appearance: none; height: 24px; background: #f0f0f0; }
.instance .chev { margin-right: 10px; }
.instance button { display: flex; align-items: center; gap: 5px; width: 78px; white-space: nowrap; }
.props { table-layout: fixed; width: 398px; border-collapse: collapse; line-height: 16px; }
.props .name { width: 196px; }
.props tr { height: 18px; }
.props td, .props th { padding: 0; font-weight: normal; text-align: left; vertical-align: top; white-space: nowrap; }
.props td:first-child { padding-left: 9px; }
.props td:last-child { padding-left: 1px; padding-right: 13px; }
.props td.in { padding-left: 4px; }
.props th { background: #e9e9e9; color: #555; padding: 1px 0 0 3px; }
.props th svg { float: right; width: 8px; height: 10px; margin: 3px 5px 0 0; }
.props button { display: block; width: 100%; height: 15px; line-height: 12px; margin-top: 1px; border: 1px solid #c9c9c9; }
.props input { display: block; appearance: none; width: 11px; height: 11px; margin: 4px 0 0 2px; border: 1px solid #b8b8b8; }

/* View tabs and drawing area */
.workspace { flex: 1; min-width: 0; display: flex; flex-direction: column; background: #fff; }
.view-tabs { flex: none; display: flex; align-items: center; height: 20px; background: #cbcbcb; color: #444; }
.view-tabs button { display: flex; align-items: center; gap: 7px; width: 130px; height: 20px; padding-left: 4px; white-space: nowrap; }
.view-tabs button:first-child { width: 141px; }
.view-tabs .wide { width: 160px; }
.view-tabs button svg { width: 16px; height: 16px; }
.view-tabs .active { width: 128px; background: #fff; font-weight: 600; }
.view-tabs .active .x { width: 12px; height: 12px; margin: 0 5px 0 auto; }
.view-tabs .list { width: 10px; height: 8px; margin: 0 5px 0 auto; }
.view { flex: 1; min-height: 0; position: relative; display: flex; margin-top: 2px; }
.scene { flex: 1; min-width: 0; height: 100%; }
.dims text { font: 14px "Open Sans", sans-serif; fill: #1340a0; }
.cube text { font-family: "Open Sans", sans-serif; font-weight: bold; fill: #8a8a8a; }
.nav { position: absolute; top: 171px; right: 19px; width: 36px; height: 118px; border: 2px solid #c2c2c2; border-radius: 6px; background: rgba(245, 245, 245, .9); }
.nav svg { width: 34px; height: 116px; overflow: visible; }
.vscroll { flex: none; display: flex; flex-direction: column; justify-content: space-between; align-items: center; width: 19px; padding-right: 1px; background: #e8e8e8; }
.vscroll svg { width: 16px; height: 16px; background: #eee; }
.vscroll span { width: 6px; height: 17px; background: #ccc; }

/* Project browser */
.browser { flex: none; display: flex; flex-direction: column; width: 318px; border-left: 3px solid #c0c0c0; background: #fff; color: #4a4a4a; }
.browser .dock-title { padding-right: 1px; }
.search { display: flex; align-items: center; flex: none; gap: 9px; height: 24px; margin: 9px 8px 8px 9px; padding-left: 8px; border: 1px solid #d5d5d5; }
.search input { flex: 1; min-width: 0; outline: 0; }
.search input::placeholder { color: #aaa; opacity: 1; }
.tree-area { flex: 1; min-height: 0; display: flex; overflow: hidden; }
.tree { flex: 1; min-width: 0; padding-left: 4px; line-height: 20px; white-space: nowrap; position: relative; z-index: 0; }
.tree ul { padding-left: 16px; }
.tree li { position: relative; }
.tree li > div { position: relative; display: flex; align-items: center; height: 20px; }
.tree button { display: grid; place-items: center; width: 12px; height: 12px; margin-right: 7px; }
.tree button svg { width: 10px; height: 10px; }
.tree .icon { width: 16px; height: 16px; margin-right: 4px; }
.tree .leaf > div { padding-left: 19px; }
.tree ul li::before { content: ""; position: absolute; left: -11px; top: 0; bottom: 0; border-left: 1px dashed #b5b5b5; }
.tree ul li:last-child::before { bottom: auto; height: 10px; }
.tree ul li > div::before { content: ""; position: absolute; left: -11px; top: 10px; width: 9px; border-top: 1px dashed #b5b5b5; }
.tree ul .leaf > div::before { width: 25px; }
.tree .selected::after { content: ""; position: absolute; z-index: -1; left: -51px; right: 1px; top: 0; bottom: 0; background: #f2f2f2; border: 1px solid #dedede; }
.tscroll { flex: none; display: flex; flex-direction: column; align-items: center; width: 17px; background: #e9e9e9; }
.tscroll svg { width: 16px; height: 16px; background: #f0f0f0; }
.tscroll span { width: 6px; height: 62%; margin-top: 7px; border-radius: 3px; background: #d2d2d2; }
```
